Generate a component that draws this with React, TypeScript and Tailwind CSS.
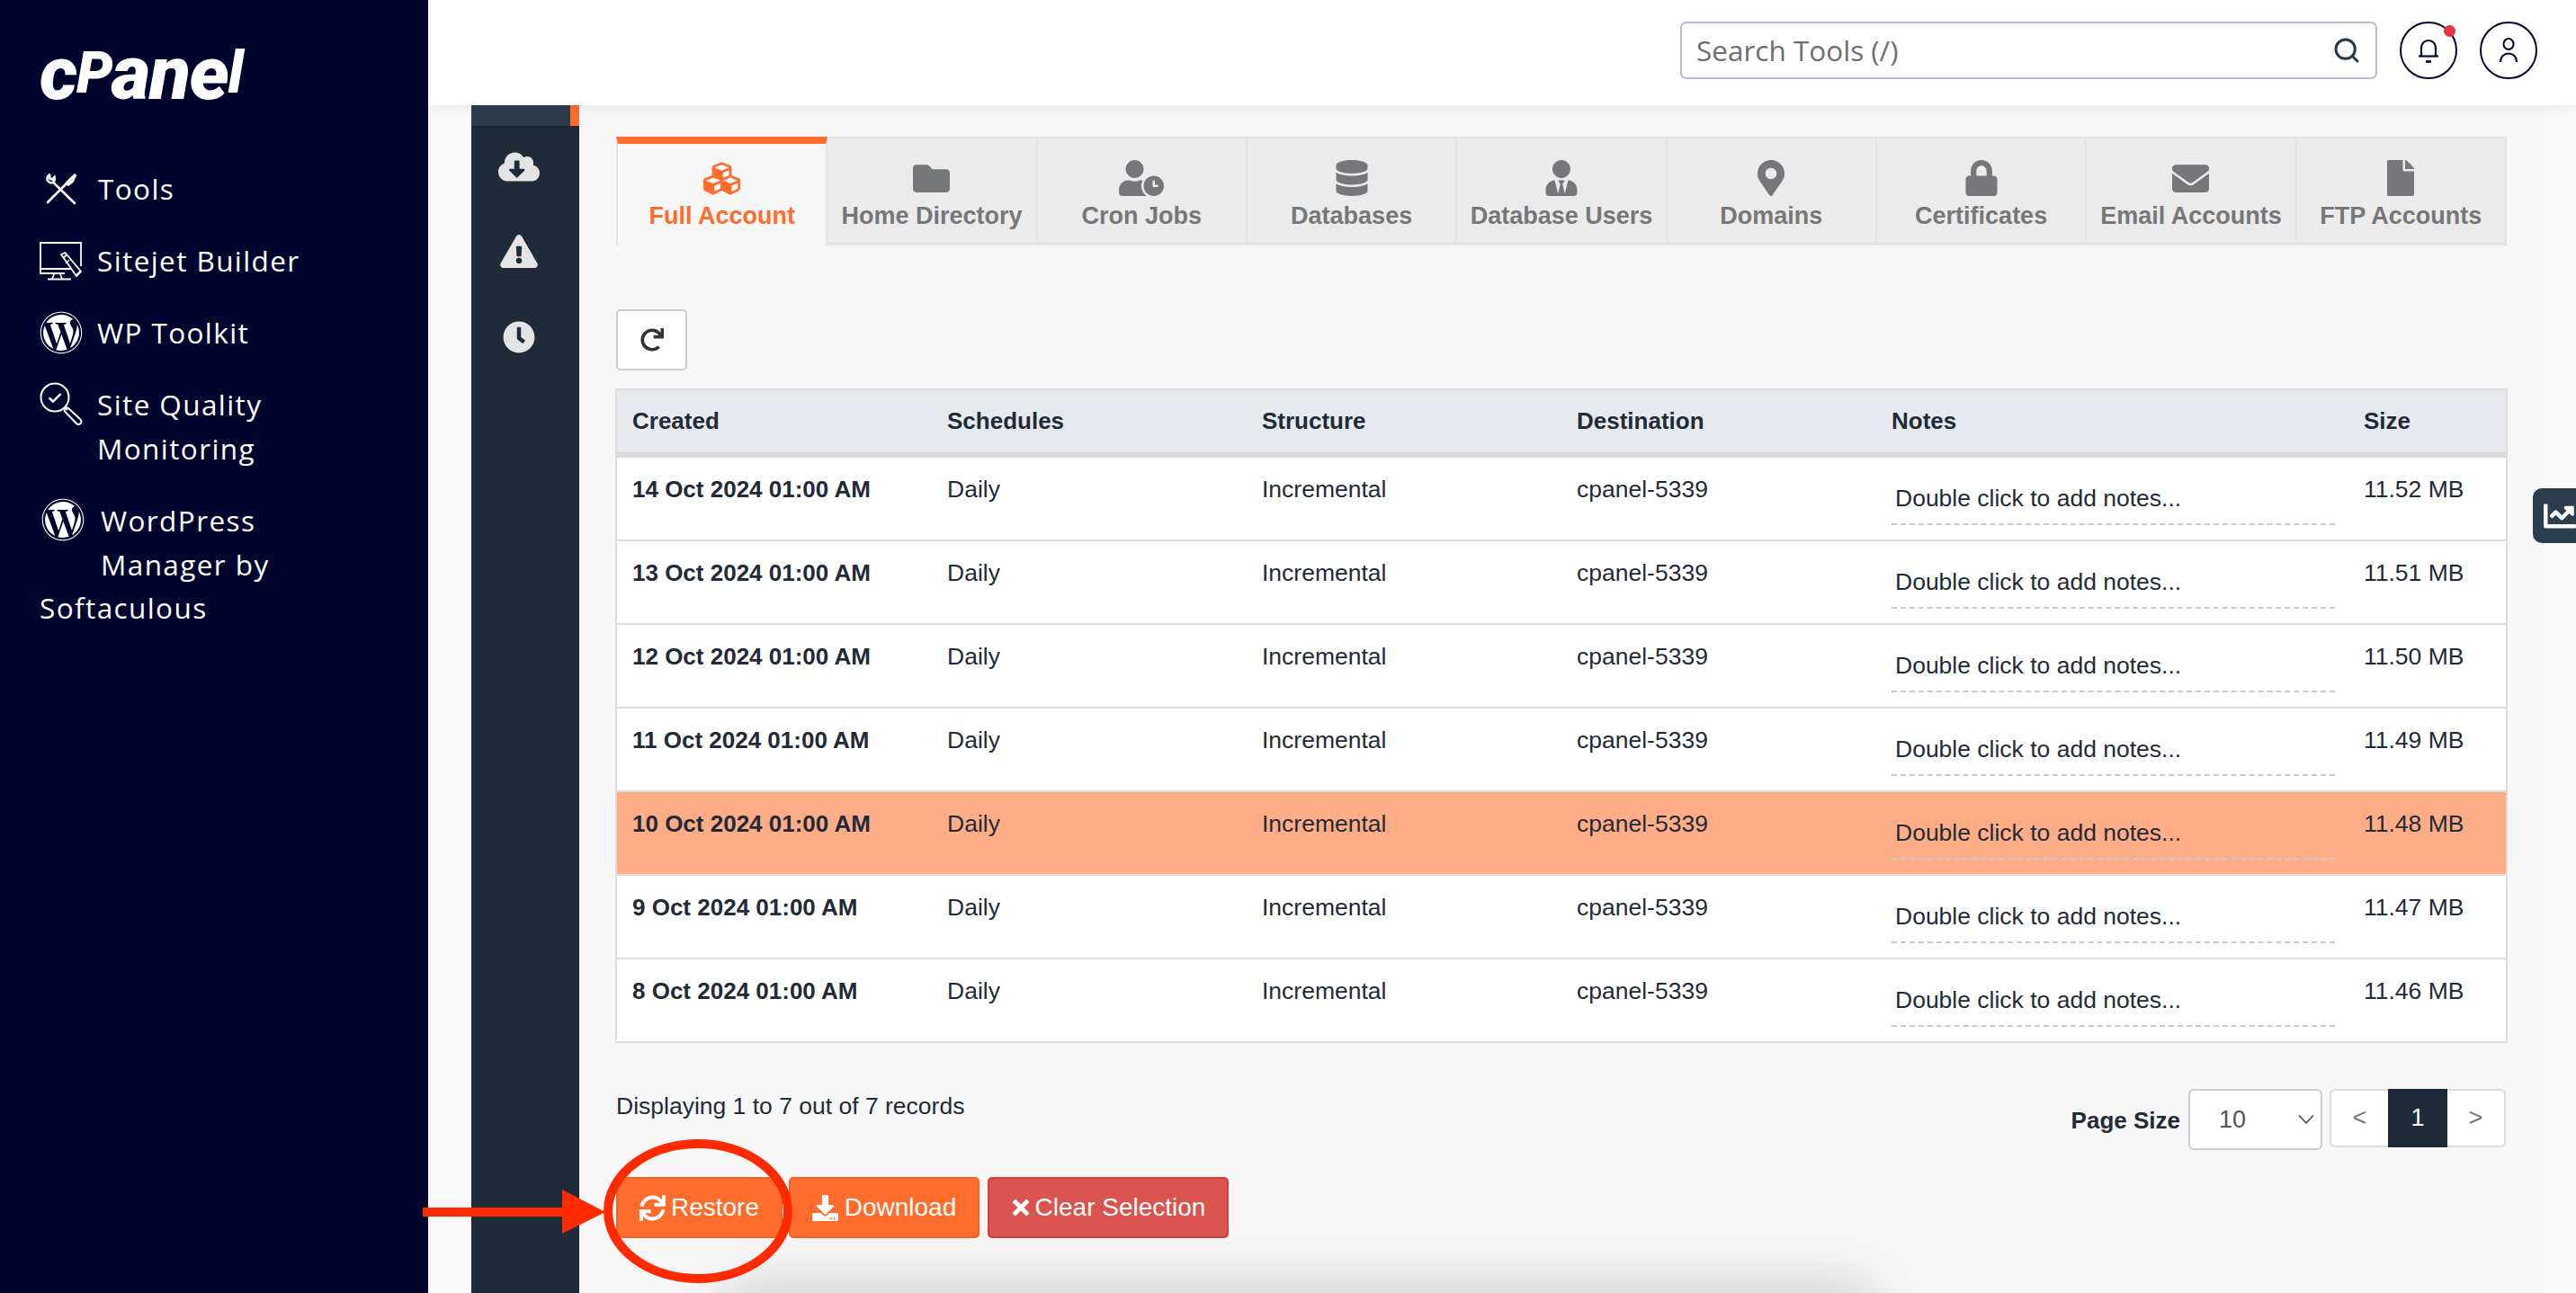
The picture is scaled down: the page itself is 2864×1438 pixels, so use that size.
import {
  FaChartLine,
  FaClock,
  FaCloudDownloadAlt,
  FaCubes,
  FaDatabase,
  FaDownload,
  FaEnvelope,
  FaExclamationTriangle,
  FaFile,
  FaFolder,
  FaLock,
  FaMapMarkerAlt,
  FaRedo,
  FaSync,
  FaTimes,
  FaUserClock,
  FaUserTie,
  FaWordpress,
} from "react-icons/fa";
import { Search } from "lucide-react";

const TABS = [
  { label: "Full Account", icon: FaCubes, box: "w-[41px] h-[41px]", active: true },
  { label: "Home Directory", icon: FaFolder, box: "w-[41px] h-[41px]" },
  { label: "Cron Jobs", icon: FaUserClock, box: "w-[50px] h-[40px]" },
  { label: "Databases", icon: FaDatabase, box: "w-[36px] h-[40px]" },
  { label: "Database Users", icon: FaUserTie, box: "w-[36px] h-[40px]" },
  { label: "Domains", icon: FaMapMarkerAlt, box: "w-[30px] h-[40px]" },
  { label: "Certificates", icon: FaLock, box: "w-[36px] h-[40px]" },
  { label: "Email Accounts", icon: FaEnvelope, box: "w-[41px] h-[41px]" },
  { label: "FTP Accounts", icon: FaFile, box: "w-[30px] h-[40px]" },
];

const ROWS = [
  { created: "14 Oct 2024 01:00 AM", size: "11.52 MB" },
  { created: "13 Oct 2024 01:00 AM", size: "11.51 MB" },
  { created: "12 Oct 2024 01:00 AM", size: "11.50 MB" },
  { created: "11 Oct 2024 01:00 AM", size: "11.49 MB" },
  { created: "10 Oct 2024 01:00 AM", size: "11.48 MB", selected: true },
  { created: "9 Oct 2024 01:00 AM", size: "11.47 MB" },
  { created: "8 Oct 2024 01:00 AM", size: "11.46 MB" },
];

const HEADERS = ["Created", "Schedules", "Structure", "Destination", "Notes", "Size"];

function ToolsIcon() {
  return (
    <svg viewBox="0 0 36 36" className="h-[36px] w-[36px]" fill="none" stroke="white" strokeWidth="2.6" strokeLinecap="round">
      <path d="M5 2.5 C2 4 1.5 8 4 10 C5.5 11.3 7.5 11.5 9.2 10.8 L33 34" />
      <path d="M5 2.5 L5.5 6.5 L8 7.5 L10.5 5 C11 7.5 10.5 9.5 9.2 10.8" />
      <path d="M24 12 L3 33" />
      <path d="M24 12 L28 7.5 L34 2 L30.5 9.5 L26 13.5" strokeWidth="3" />
    </svg>
  );
}

function BuilderIcon() {
  return (
    <svg viewBox="0 0 47 43" className="h-[43px] w-[47px]" fill="none" stroke="white" strokeWidth="1.8">
      <path d="M36 30 H1 V1 H46 V27" />
      <path d="M1 30 V35 H28" />
      <path d="M16 36 L14 41 M23 36 L25 41 M9 41.5 H35" />
      <path d="M24 14 L28.5 12 L46 33 L41 38 Z" fill="#00052d" />
      <path d="M26 18 L30 14.5 M41 37 L45 33" />
      <path d="M33 20 L29 24" strokeWidth="1.2" />
    </svg>
  );
}

function QualityIcon() {
  return (
    <svg viewBox="0 0 48 48" className="h-[48px] w-[48px]" fill="none" stroke="white" strokeWidth="2">
      <circle cx="17" cy="17" r="15.5" />
      <path d="M10.5 17.5 L15 21.5 L23.5 13" strokeWidth="2.4" />
      <path d="M28 28 L31 31" />
      <path d="M32 29 L45.5 41.5 A3 3 0 0 1 41 46 L28.5 33 A2.5 2.5 0 0 1 32 29 Z" />
    </svg>
  );
}

function BellIcon() {
  return (
    <svg viewBox="0 0 24 28" className="h-[28px] w-[24px]" fill="none" stroke="#00052d" strokeWidth="2.2">
      <path d="M4 20 V11 A8 8 0 0 1 20 11 V20" />
      <path d="M1 20.5 H23" />
      <path d="M9 26.5 H15" strokeWidth="2.6" />
    </svg>
  );
}

function UserIcon() {
  return (
    <svg viewBox="0 0 22 28" className="h-[28px] w-[22px]" fill="none" stroke="#00052d" strokeWidth="2">
      <ellipse cx="11" cy="7" rx="5.5" ry="6" />
      <path d="M2 27 C2 21 6 17.5 11 17.5 C16 17.5 20 21 20 27" />
    </svg>
  );
}

function Sidebar() {
  return (
    <aside
      className="flex w-[476px] shrink-0 flex-col bg-[#00052d] pl-[44px] pt-[52px] text-white"
      style={{ fontFamily: '"Open Sans", sans-serif' }}
    >
      {/* wordmark */}
      <div
        className="flex h-[60px] items-end text-[64px] leading-[60px] font-black italic tracking-[-1.4px]"
        style={{ fontFamily: 'Roboto, sans-serif' }}
      >
        <span className="text-[84px]">c</span>
        <span>P</span>
        <span className="text-[84px]">ane</span>
        <span>l</span>
      </div>
      <nav className="mt-[74px] flex flex-col gap-[32px] text-[31.5px] leading-[48px] tracking-[1.4px]">
        <div className="flex items-center">
          <span className="ml-[6px] mr-[23px] flex"><ToolsIcon /></span>
          Tools
        </div>
        <div className="flex items-center">
          <span className="mr-[17px] flex"><BuilderIcon /></span>
          Sitejet Builder
        </div>
        <div className="flex items-center">
          <FaWordpress className="mr-[16px] h-[48px] w-[48px]" />
          WP Toolkit
        </div>
        <div className="-mt-[1px] flex items-start">
          <span className="mr-[16px] flex"><QualityIcon /></span>
          <span className="leading-[49px]">Site Quality<br />Monitoring</span>
        </div>
        <div className="-mt-[1px]">
          <div className="flex items-start">
            <FaWordpress className="ml-[2px] mr-[18px] h-[48px] w-[48px]" />
            <span className="leading-[49px]">WordPress<br />Manager by</span>
          </div>
          <div>Softaculous</div>
        </div>
      </nav>
    </aside>
  );
}

function Header() {
  return (
    <header className="relative z-10 flex h-[117px] shrink-0 items-start bg-white pl-[1392px] pt-[24px] shadow-[0_2px_14px_rgba(0,0,0,0.07)]">
      <div className="flex h-[64px] w-[775px] items-center justify-between rounded-[7px] border-2 border-[#babccd] pl-[16px] pr-[16px]">
        <span className="text-[31.5px] text-[#6c6f73]" style={{ fontFamily: '"Open Sans", sans-serif' }}>
          Search Tools (/)
        </span>
        <Search className="h-[32px] w-[32px] text-[#22384a]" strokeWidth={2.2} />
      </div>
      <div className="relative ml-[25px] flex h-[64px] w-[64px] items-center justify-center rounded-full border-2 border-[#00052d]">
        <BellIcon />
        <span className="absolute right-[0px] top-[2px] h-[13px] w-[13px] rounded-full bg-[#e8323f]" />
      </div>
      <div className="ml-[25px] flex h-[64px] w-[64px] items-center justify-center rounded-full border-2 border-[#00052d]">
        <UserIcon />
      </div>
    </header>
  );
}

function ActionRail() {
  return (
    <div className="ml-[48px] w-[120px] shrink-0 bg-[#1f2b38]">
      <div className="flex h-[24px] justify-end border-b border-[#1a242f] bg-[#2c3c4b]">
        <div className="w-[10px] bg-[#ff6c2c]" />
      </div>
      <div className="flex w-[106px] flex-col items-center text-[#e4e4e4]">
        <div className="mt-[28px] flex h-[32px] items-center">
          <FaCloudDownloadAlt className="h-[37px] w-[46px]" />
        </div>
        <div className="mt-[60px] flex h-[37px] items-center">
          <FaExclamationTriangle className="h-[37px] w-[42px]" />
        </div>
        <div className="mt-[59px] flex h-[36px] items-center">
          <FaClock className="h-[36px] w-[36px]" />
        </div>
      </div>
    </div>
  );
}

function Tabs() {
  return (
    <div className="ml-[1px] flex h-[121px] w-[2102px] border-r-2 border-t-2 border-[#e3e3e3]">
      {TABS.map((tab) => {
        const Icon = tab.icon;
        return (
          <div
            key={tab.label}
            className={
              tab.active
                ? "-mt-[2px] flex h-[121px] flex-1 flex-col items-center border-l-2 border-r-2 border-t-[8px] border-l-[#e3e3e3] border-r-[#e3e3e3] border-t-[#ff6c2c] pt-[18px] text-[#ff6c2c]"
                : "flex h-[119px] flex-1 flex-col items-center border-b-[4px] border-r-2 border-[#e3e3e3] bg-[#ebebeb] pt-[24px] text-[#76777a] last:border-r-0"
            }
          >
            <div className="flex h-[40px] items-center justify-center">
              <Icon className={tab.box} />
            </div>
            <div className="mt-[6px] text-[27px] leading-[32px] font-bold whitespace-nowrap">{tab.label}</div>
          </div>
        );
      })}
    </div>
  );
}

function BackupsTable() {
  return (
    <div className="mt-[20px] w-[2104px] border-2 border-[#dddddd] text-[26.5px] text-[#1f2b38]">
      <table className="w-full table-fixed border-separate border-spacing-0">
        <colgroup>
          <col className="w-[350px]" />
          <col className="w-[350px]" />
          <col className="w-[350px]" />
          <col className="w-[350px]" />
          <col className="w-[525px]" />
          <col className="w-[175px]" />
        </colgroup>
        <thead>
          <tr>
            {HEADERS.map((h) => (
              <th key={h} className="h-[75px] border-b-[6px] border-[#dbdbdb] bg-[#e6eaee] pl-[17px] text-left text-[26px] font-bold">
                {h}
              </th>
            ))}
          </tr>
        </thead>
        <tbody>
          {ROWS.map((row, i) => {
            const bg = row.selected ? "bg-[#ffad87]" : "bg-white";
            const edge = i === ROWS.length - 1 ? "h-[91px]" : "h-[93px] border-b-2 border-[#dddddd]";
            const cell = `pl-[17px] pt-[17px] align-top leading-[36px] ${bg} ${edge}`;
            return (
              <tr key={row.created}>
                <td className={`${cell} text-[26px] font-bold`}>{row.created}</td>
                <td className={cell}>Daily</td>
                <td className={cell}>Incremental</td>
                <td className={cell}>cpanel-5339</td>
                <td className={cell}>
                  <div className="mt-[10px] h-[48px] w-[493px] border-b-2 border-dashed border-[#c9c9c9] pl-[4px]">
                    Double click to add notes...
                  </div>
                </td>
                <td className={cell}>{row.size}</td>
              </tr>
            );
          })}
        </tbody>
      </table>
    </div>
  );
}

function Pager() {
  return (
    <div className="flex h-[68px] w-[2102px] items-start justify-between text-[#1f2b38]">
      <div className="ml-[1px] text-[26.5px] leading-[38px]">Displaying 1 to 7 out of 7 records</div>
      <div className="flex items-start">
        <div className="mr-[9px] mt-[16px] text-[26px] leading-[38px] font-bold">Page Size</div>
        <div className="flex h-[68px] w-[149px] items-center justify-between rounded-[6px] border-2 border-[#cccccc] bg-white pl-[32px] pr-[7px] text-[27px] text-[#555555]">
          10
          <svg viewBox="0 0 18 12" className="h-[12px] w-[18px]" fill="none" stroke="#555555" strokeWidth="1.8">
            <path d="M1 1.5 L9 10 L17 1.5" />
          </svg>
        </div>
        <div className="ml-[8px] flex h-[65px] w-[196px] rounded-[6px] border-2 border-[#dddddd] bg-white text-[27px] text-[#777777]">
          <div className="flex flex-1 items-center justify-center">&lt;</div>
          <div className="-my-[2px] flex w-[66px] items-center justify-center bg-[#1f2b38] text-white">1</div>
          <div className="flex flex-1 items-center justify-center">&gt;</div>
        </div>
      </div>
    </div>
  );
}

function Actions() {
  const orange = "flex h-[68px] items-center rounded-[5px] border-2 border-[#f0642a] bg-[#ff6c2c] text-[28px] text-white";
  return (
    <div className="ml-[1px] mt-[30px] flex">
      <button className={`${orange} w-[185px] justify-center gap-[6px]`}>
        <FaSync className="h-[29px] w-[29px]" />
        Restore
      </button>
      <button className={`${orange} ml-[7px] w-[212px] justify-center gap-[7px]`}>
        <FaDownload className="h-[29px] w-[29px]" />
        Download
      </button>
      <button className="ml-[9px] flex h-[68px] w-[268px] items-center justify-center gap-[5px] rounded-[5px] border-2 border-[#d43f3a] bg-[#d9534f] text-[28px] text-white">
        <FaTimes className="h-[26px] w-[22px]" />
        Clear Selection
      </button>
    </div>
  );
}

export default function App() {
  return (
    <div
      className="relative flex h-screen w-full overflow-hidden bg-[#f9f9f9]"
      style={{ fontFamily: '"Liberation Sans", Arial, sans-serif' }}
    >
      <Sidebar />
      <div className="flex min-w-0 flex-1 flex-col">
        <Header />
        <div className="flex flex-1">
          <ActionRail />
          <main className="w-[2185px] bg-[#f7f7f7] pl-[40px] pt-[35px]">
            <Tabs />
            <button className="ml-[1px] mt-[71px] flex h-[68px] w-[79px] items-center justify-center rounded-[5px] border-2 border-[#cccccc] bg-white text-[#333333]">
              <FaRedo className="h-[26px] w-[26px]" />
            </button>
            <BackupsTable />
            <div className="mt-[51px]">
              <Pager />
            </div>
            <Actions />
          </main>
        </div>
      </div>

      {/* stats tab on the right edge */}
      <div className="absolute left-[2816px] top-[543px] flex h-[61px] w-[48px] items-center overflow-hidden rounded-l-[10px] bg-[#2c3d4d] pl-[10px] text-white">
        <FaChartLine className="h-[36px] w-[40px] shrink-0" />
      </div>

      {/* shadow creeping in from the bottom of the capture */}
      <div className="absolute left-[830px] top-[1452px] h-[20px] w-[1230px] shadow-[0_0_60px_24px_rgba(0,0,0,0.16)]" />

      {/* red annotation: arrow and ring around Restore */}
      <svg className="absolute left-[460px] top-[1260px] h-[178px] w-[430px]" viewBox="0 0 430 178" fill="none">
        <path d="M10 83 H165 V63 L213 88 L165 112 V93 H10 Z" fill="#ff2a00" />
        <ellipse cx="316" cy="87" rx="100" ry="75" stroke="#ff2a00" strokeWidth="10" />
      </svg>
    </div>
  );
}
